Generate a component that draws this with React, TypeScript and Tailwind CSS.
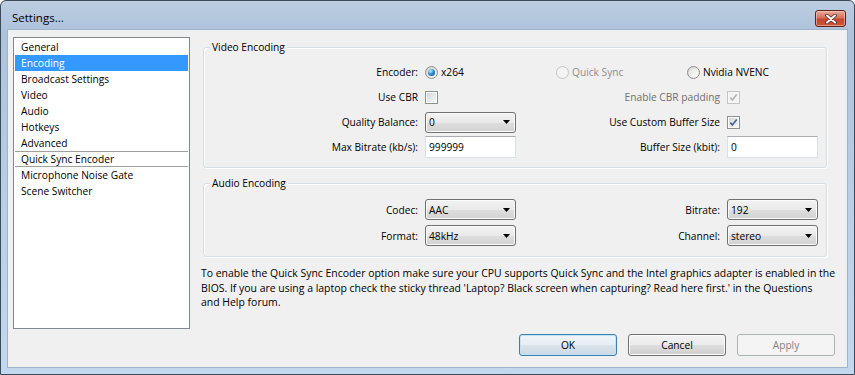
import React from "react";

function Radio({ checked = false, disabled = false }: { checked?: boolean; disabled?: boolean }) {
  return (
    <span
      className={`flex h-[13px] w-[13px] shrink-0 items-center justify-center rounded-full border ${
        disabled ? "border-[#c4c4c4] bg-[#f4f4f4]" : "border-[#8e8f8f] bg-[linear-gradient(135deg,#d0d0d0,#f9f9f9)]"
      }`}
    >
      {checked ? (
        <span className="h-[7px] w-[7px] rounded-full bg-[radial-gradient(circle_at_35%_30%,#c4ecff_0%,#2f93d3_45%,#0d4a7a_100%)]" />
      ) : (
        <span
          className={`h-[9px] w-[9px] rounded-full ${
            disabled ? "bg-[#f4f4f4]" : "bg-[linear-gradient(135deg,#e0e0e0,#ffffff)]"
          }`}
        />
      )}
    </span>
  );
}

function Check({ checked = false, disabled = false }: { checked?: boolean; disabled?: boolean }) {
  return (
    <span
      className={`flex h-[13px] w-[13px] shrink-0 items-center justify-center border ${
        disabled ? "border-[#c4c4c4] bg-[#f7f7f7]" : "border-[#8e8f8f] bg-white"
      }`}
    >
      <span
        className={`flex h-[9px] w-[9px] items-center justify-center ${
          disabled ? "bg-[#f4f4f4]" : "bg-[linear-gradient(135deg,#d3d6da,#f8f8f8)]"
        }`}
      >
        {checked && (
          <svg width="9" height="9" viewBox="0 0 9 9">
            <path
              d="M1.3 4.6 L3.4 6.9 L7.7 1.4"
              fill="none"
              stroke={disabled ? "#b3b3b3" : "#4a5f97"}
              strokeWidth="1.6"
            />
          </svg>
        )}
      </span>
    </span>
  );
}

function Combo({ value }: { value: string }) {
  return (
    <div className="flex h-[21px] w-[91px] items-center justify-between rounded-[3px] border border-[#707070] bg-[linear-gradient(to_bottom,#f3f3f3_0%,#e9e9e9_50%,#dedede_52%,#d2d2d2_100%)] pl-[3px] pr-[5px] shadow-[inset_0_0_0_1px_#fbfbfb]">
      <span className="leading-[14px]">{value}</span>
      <svg width="7" height="4" viewBox="0 0 7 4">
        <path d="M0 0H7L3.5 4Z" fill="#000" />
      </svg>
    </div>
  );
}

function Input({ value }: { value: string }) {
  return (
    <div className="flex h-[22px] w-[91px] items-center border border-[#dbdfe6] border-t-[#abadb3] bg-white pl-[3px]">
      <span className="leading-[14px]">{value}</span>
    </div>
  );
}

function Label({ children, disabled = false }: { children: React.ReactNode; disabled?: boolean }) {
  return (
    <div className={`whitespace-nowrap pr-[1px] text-right leading-[14px] ${disabled ? "text-[#6f6f6f]" : "text-black"}`}>
      {children}
    </div>
  );
}

function Group({ title, className, children }: { title: string; className: string; children: React.ReactNode }) {
  return (
    <div
      className={`ml-[2px] w-[624px] rounded-[3px] border border-[#d5dfe5] shadow-[inset_1px_1px_0_#ffffff,1px_1px_0_#ffffff] ${className}`}
    >
      <div className="-mt-[8px] ml-[6px] w-fit bg-[#f0f0f0] px-[2px] leading-[14px]">{title}</div>
      {children}
    </div>
  );
}

const items: { label: string; selected?: boolean; sep?: boolean }[] = [
  { label: "General" },
  { label: "Encoding", selected: true },
  { label: "Broadcast Settings" },
  { label: "Video" },
  { label: "Audio" },
  { label: "Hotkeys" },
  { label: "Advanced" },
  { label: "Quick Sync Encoder", sep: true },
  { label: "Microphone Noise Gate" },
  { label: "Scene Switcher" },
];

function Button({ label, kind }: { label: string; kind: "default" | "normal" | "disabled" }) {
  const cls =
    kind === "default"
      ? "border-[#3c7fb1] bg-[linear-gradient(to_bottom,#f0f5f9_0%,#e6edf3_50%,#d9e3ec_52%,#ccd9e5_100%)] shadow-[inset_0_0_0_1px_#bfe3f7] text-black"
      : kind === "normal"
      ? "border-[#707070] bg-[linear-gradient(to_bottom,#f2f2f2_0%,#ebebeb_50%,#dddddd_52%,#cfcfcf_100%)] shadow-[inset_0_0_0_1px_#fcfcfc] text-black"
      : "border-[#adb2b5] bg-[#f4f4f4] text-[#838383]";
  return (
    <div className={`flex h-[22px] w-[98px] items-center justify-center rounded-[3px] border ${cls}`}>
      <span className="leading-[14px]">{label}</span>
    </div>
  );
}

export default function App() {
  return (
    <div className="h-[375px] w-[855px] overflow-hidden bg-white font-['Open_Sans','Noto_Sans',sans-serif] text-[10.2px] text-black">
      <div className="flex h-[375px] w-[855px] flex-col rounded-t-[6px] border border-[#3b4b5c] bg-[linear-gradient(to_bottom,#bccde0_0%,#adc3dc_8%,#b9d0e8_60%,#c3d8ee_100%)]">
        {/* Title bar */}
        <div className="flex h-[28px] items-start justify-between pl-[11px] pr-[8px] pt-[9px]">
          <span className="text-[11.5px] leading-[16px] text-black">Settings...</span>
          <div className="flex h-[17px] w-[31px] items-center justify-center rounded-[3px] border border-[#5e2119] bg-[linear-gradient(to_bottom,#e8a99c_0%,#d7705c_45%,#c2462d_55%,#c9573b_100%)] shadow-[inset_0_0_0_1px_rgba(255,220,210,0.5)]">
            <svg width="12" height="10" viewBox="0 0 12 10">
              <path d="M2 1.5 L10 8.5 M10 1.5 L2 8.5" stroke="#5a2a22" strokeWidth="3.6" strokeLinecap="round" />
              <path d="M2 1.5 L10 8.5 M10 1.5 L2 8.5" stroke="#ffffff" strokeWidth="2" strokeLinecap="round" />
            </svg>
          </div>
        </div>

        {/* Client area */}
        <div className="ml-[6px] flex h-[339px] w-[841px] items-start border border-[#9fb3ca] bg-[#f0f0f0] pl-[5px] pt-[7px]">
          {/* List */}
          <div className="flex h-[292px] w-[177px] flex-col border border-[#828790] bg-white p-[1px]">
            {items.map((it) => (
              <div
                key={it.label}
                className={`box-border h-[16px] whitespace-nowrap pl-[6px] ${
                  it.selected ? "bg-[#3399ff] text-white" : "text-black"
                } ${it.sep ? "border-y border-[#a0a0a0] leading-[14px]" : "leading-[16px]"}`}
              >
                {it.label}
              </div>
            ))}
          </div>

          {/* Right panel */}
          <div className="ml-[11px] flex h-[319px] w-[634px] flex-col">
            <Group title="Video Encoding" className="mt-[10px] h-[121px]">
              <div className="mt-[7px] grid grid-cols-[215px_91px_199px_91px] grid-rows-[22px_22px_22px_22px] items-center gap-x-[6px] gap-y-[3px]">
                <Label>Encoder:</Label>
                <div className="col-span-3 grid grid-cols-3 items-center">
                  <div className="flex items-center gap-[3px]">
                    <Radio checked />
                    <span className="leading-[14px]">x264</span>
                  </div>
                  <div className="flex items-center gap-[3px]">
                    <Radio disabled />
                    <span className="leading-[14px] text-[#8d8d8d]">Quick Sync</span>
                  </div>
                  <div className="flex items-center gap-[3px]">
                    <Radio />
                    <span className="leading-[14px]">Nvidia NVENC</span>
                  </div>
                </div>

                <Label>Use CBR</Label>
                <div className="flex items-center">
                  <Check />
                </div>
                <Label disabled>Enable CBR padding</Label>
                <div className="flex items-center">
                  <Check checked disabled />
                </div>

                <Label>Quality Balance:</Label>
                <Combo value="0" />
                <Label>Use Custom Buffer Size</Label>
                <div className="flex items-center">
                  <Check checked />
                </div>

                <Label>Max Bitrate (kb/s):</Label>
                <Input value="999999" />
                <Label>Buffer Size (kbit):</Label>
                <Input value="0" />
              </div>
            </Group>

            <Group title="Audio Encoding" className="mt-[15px] h-[74px]">
              <div className="mt-[9px] grid grid-cols-[215px_91px_199px_91px] grid-rows-[21px_21px] items-center gap-x-[6px] gap-y-[5px]">
                <Label>Codec:</Label>
                <Combo value="AAC" />
                <Label>Bitrate:</Label>
                <Combo value="192" />
                <Label>Format:</Label>
                <Combo value="48kHz" />
                <Label>Channel:</Label>
                <Combo value="stereo" />
              </div>
            </Group>

            <p className="mt-[9px] whitespace-nowrap text-[10.45px] leading-[14.5px]">
              To enable the Quick Sync Encoder option make sure your CPU supports Quick Sync and the Intel graphics adapter is enabled in the
              <br />
              BIOS. If you are using a laptop check the sticky thread 'Laptop? Black screen when capturing? Read here first.' in the Questions
              <br />
              and Help forum.
            </p>

            <div className="mt-auto flex justify-end gap-[11px]">
              <Button label="OK" kind="default" />
              <Button label="Cancel" kind="normal" />
              <Button label="Apply" kind="disabled" />
            </div>
          </div>
        </div>
        <div className="h-[6px]" />
      </div>
    </div>
  );
}
